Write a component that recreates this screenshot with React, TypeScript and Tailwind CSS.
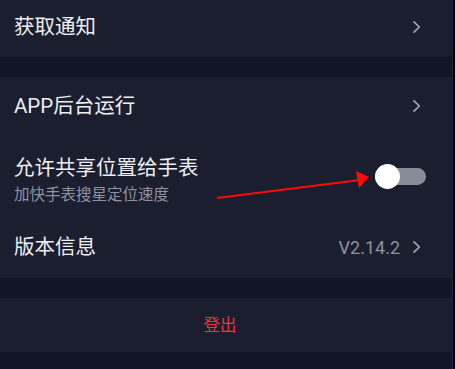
import React from "react";

const font = { fontFamily: 'Roboto, "Noto Sans CJK SC", "Noto Sans", sans-serif' };

function Chevron() {
  return (
    <svg width="9" height="14" viewBox="0 0 9 14" className="shrink-0">
      <path d="M2 1.8 L7.3 7 L2 12.2" fill="none" stroke="#a3a6b0" strokeWidth="1.7" strokeLinecap="round" strokeLinejoin="round" />
    </svg>
  );
}

export default function App() {
  return (
    <div className="relative flex w-[455px] h-[369px] overflow-hidden bg-[#111526]" style={font}>
      <div className="flex flex-col w-[452px]">
        <div className="flex items-center justify-between h-[57px] pb-[3px] pl-[14px] pr-[31px] bg-[#1b1e2f]">
          <span className="text-[20.5px] text-[#eeeff2]">获取通知</span>
          <Chevron />
        </div>
        <div className="h-[20px]" />
        <div className="flex flex-col bg-[#1b1e2f]">
          <div className="flex items-center justify-between h-[58px] pl-[14px] pr-[31px]">
            <span className="text-[20.5px] text-[#eeeff2]">APP后台运行</span>
            <Chevron />
          </div>
          <div className="flex items-center justify-between h-[83px] pl-[14px] pr-[26px] pt-[6px]">
            <div className="flex flex-col">
              <span className="text-[20.5px] leading-[30px] text-[#eeeff2]">允许共享位置给手表</span>
              <span className="text-[15.5px] leading-[24px] text-[#8e92a0]">加快手表搜星定位速度</span>
            </div>
            <div className="relative w-[51px] h-[25px] flex items-center -mt-[6px]">
              <div className="w-[51px] h-[17px] rounded-full bg-[#898c96]" />
              <div className="absolute left-0 top-0 w-[25px] h-[25px] rounded-full bg-white" />
            </div>
          </div>
          <div className="flex items-center justify-between h-[60px] pl-[14px] pr-[31px] pb-[2px]">
            <span className="text-[20.5px] text-[#eeeff2]">版本信息</span>
            <div className="flex items-center gap-[12px]">
              <span className="text-[18px] text-[#8e92a0]">V2.14.2</span>
              <Chevron />
            </div>
          </div>
        </div>
        <div className="h-[20px]" />
        <div className="flex items-center justify-center h-[54px] pr-[12px] pt-[2px] bg-[#1b1e2f]">
          <span className="text-[16.5px] text-[#e23b3b]">登出</span>
        </div>
      </div>
      <div className="w-[1px] bg-[#22263a]" />
      <div className="w-[2px] bg-black" />
      <svg className="absolute left-0 top-0" width="455" height="369" viewBox="0 0 455 369">
        <line x1="217" y1="198" x2="360" y2="180" stroke="#ff0a0a" strokeWidth="2.2" />
        <polygon points="369,177 356,171 359,188" fill="#ff0a0a" />
      </svg>
    </div>
  );
}
